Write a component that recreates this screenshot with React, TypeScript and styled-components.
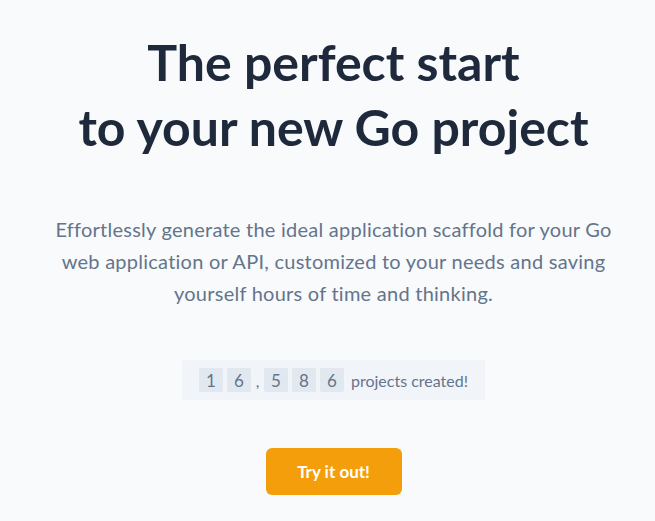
import styled, { createGlobalStyle } from 'styled-components';

const GlobalStyle = createGlobalStyle`
  html, body {
    margin: 0;
    padding: 0;
    background-color: #f8fafc;
  }
  body {
    font-family: Lato, 'Open Sans', sans-serif;
  }
`;

const Hero = styled.main`
  display: flex;
  flex-direction: column;
  align-items: center;
  padding: 30px 0 0 12px;
  text-align: center;
`;

const Title = styled.h1`
  margin: 0;
  font-size: 50px;
  line-height: 65px;
  font-weight: 700;
  color: #1e293b;
`;

const Lead = styled.p`
  margin: 53px 0 0;
  max-width: 580px;
  font-size: 20px;
  line-height: 32px;
  letter-spacing: 0.25px;
  color: #64748b;
`;

const Counter = styled.div`
  display: flex;
  align-items: center;
  gap: 4px;
  margin-top: 51px;
  padding: 8px 17px;
  background-color: #f1f5f9;
  color: #64748b;
  font-size: 16px;
`;

const Digit = styled.span`
  display: flex;
  align-items: center;
  justify-content: center;
  width: 24px;
  height: 24px;
  border-radius: 2px;
  background-color: #e2e8f0;
  font-size: 17px;
`;

const Comma = styled.span`
  width: 5px;
  text-align: center;
`;

const Label = styled.span`
  margin-left: 3px;
`;

const CtaButton = styled.button`
  margin-top: 48px;
  width: 136px;
  height: 47px;
  border: none;
  border-radius: 6px;
  background-color: #f59e0b;
  color: #ffffff;
  font-family: inherit;
  font-size: 17px;
  font-weight: 700;
  cursor: pointer;
`;

const count = '16,586';

export default function App() {
  return (
    <>
      <GlobalStyle />
      <Hero>
        <Title>
          The perfect start
          <br />
          to your new Go project
        </Title>
        <Lead>
          Effortlessly generate the ideal application scaffold for your Go web application or API,
          customized to your needs and saving yourself hours of time and thinking.
        </Lead>
        <Counter>
          {count.split('').map((ch, i) =>
            ch === ',' ? <Comma key={i}>,</Comma> : <Digit key={i}>{ch}</Digit>
          )}
          <Label>projects created!</Label>
        </Counter>
        <CtaButton>Try it out!</CtaButton>
      </Hero>
    </>
  );
}
